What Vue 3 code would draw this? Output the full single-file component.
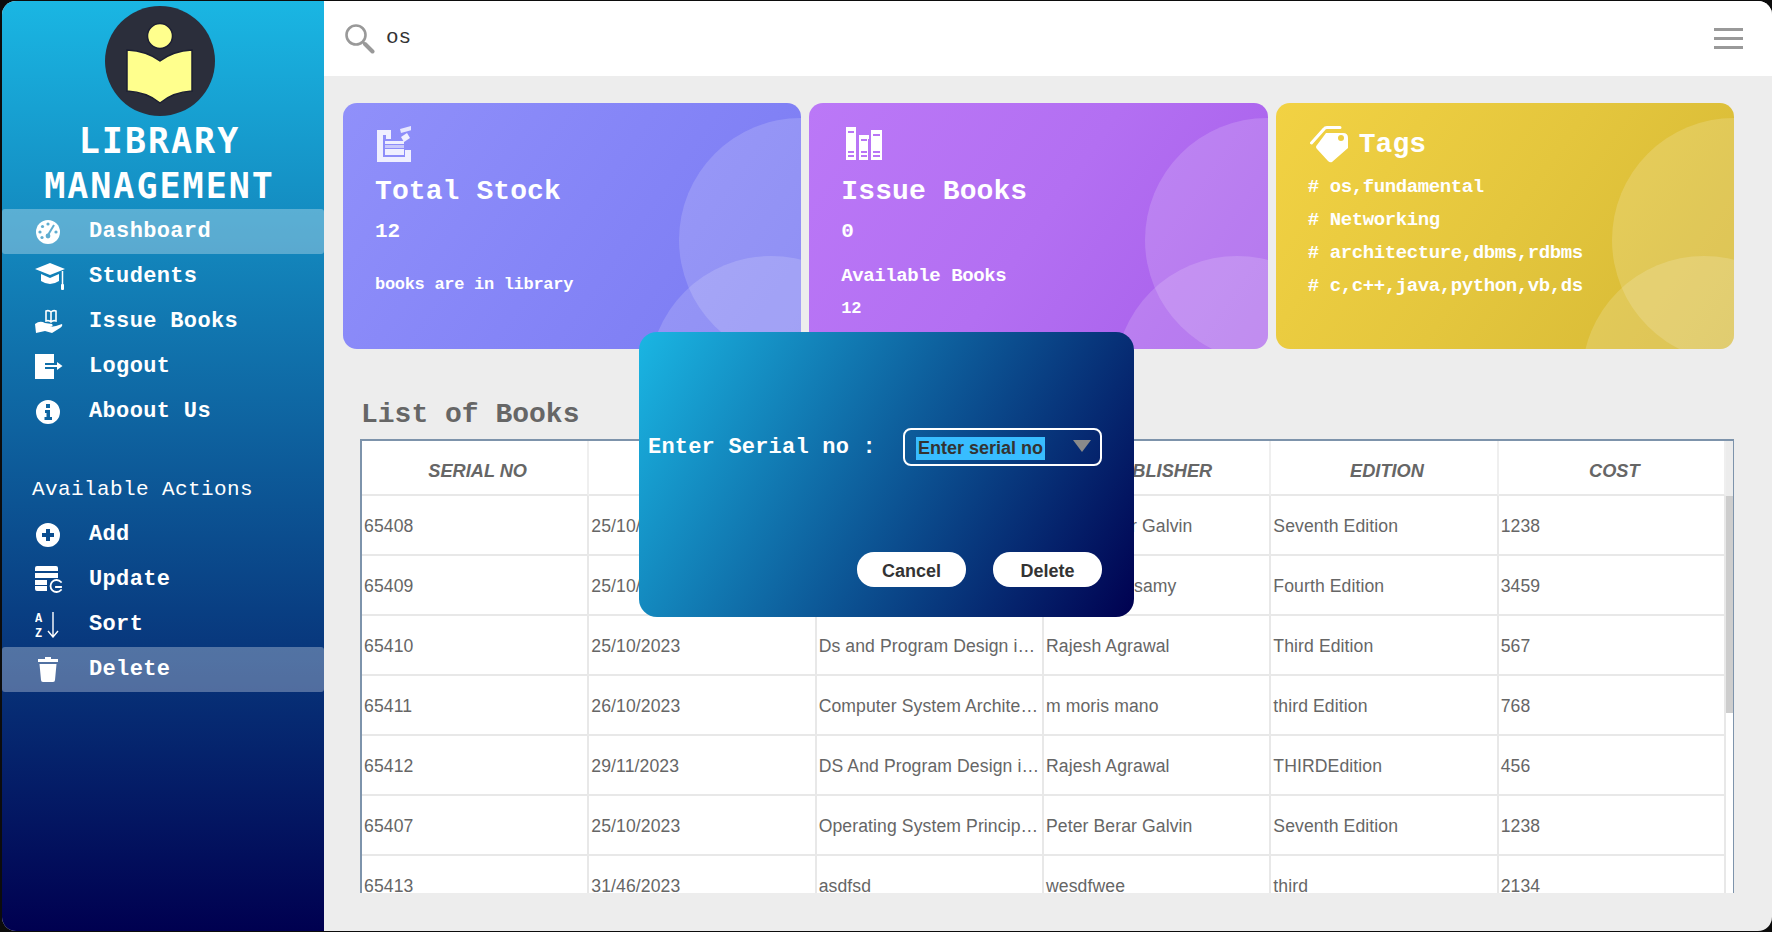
<script setup>
const mainNav = [
  { label: 'Dashboard', icon: 'dash', active: true },
  { label: 'Students', icon: 'cap' },
  { label: 'Issue Books', icon: 'issue' },
  { label: 'Logout', icon: 'logout' },
  { label: 'Aboout Us', icon: 'info' },
];
const actionNav = [
  { label: 'Add', icon: 'add' },
  { label: 'Update', icon: 'update' },
  { label: 'Sort', icon: 'sort' },
  { label: 'Delete', icon: 'trash', active: true },
];
const tags = ['os,fundamental', 'Networking', 'architecture,dbms,rdbms', 'c,c++,java,python,vb,ds'];
const columns = ['SERIAL NO', 'DATE', 'BOOK NAME', 'PUBLISHER', 'EDITION', 'COST'];
const books = [
  ['65408', '25/10/2023', 'Operating System Principles', 'Peter Berar Galvin', 'Seventh Edition', '1238'],
  ['65409', '25/10/2023', 'Computer Networking', 'E Balagurusamy', 'Fourth Edition', '3459'],
  ['65410', '25/10/2023', 'Ds and Program Design in C', 'Rajesh Agrawal', 'Third Edition', '567'],
  ['65411', '26/10/2023', 'Computer System Architecture', 'm moris mano', 'third Edition', '768'],
  ['65412', '29/11/2023', 'DS And Program Design in C', 'Rajesh Agrawal', 'THIRDEdition', '456'],
  ['65407', '25/10/2023', 'Operating System Principles', 'Peter Berar Galvin', 'Seventh Edition', '1238'],
  ['65413', '31/46/2023', 'asdfsd', 'wesdfwee', 'third', '2134'],
];
</script>

<template>
  <div class="frame">
    <aside class="sidebar">
      <div class="logo">
        <svg viewBox="0 0 110 110" width="110" height="110">
          <circle cx="55" cy="55" r="55" fill="#2b2e3b" />
          <circle cx="55" cy="30" r="12.5" fill="#ffff8d" stroke="#1c1f33" stroke-width="1.5" />
          <path d="M22 44 Q42 45 55 55 Q68 45 87 44 V85 Q68 86 55 97 Q42 86 22 85 Z" fill="#ffff8d" stroke="#1c1f33" stroke-width="1.5" />
        </svg>
      </div>
      <h1 class="brand">LIBRARY<br />MANAGEMENT</h1>

      <nav>
        <div v-for="item in mainNav" :key="item.label" class="nav-item" :class="{ active: item.active }">
          <span class="nav-icon">
            <svg v-if="item.icon === 'dash'" viewBox="0 0 26 26" width="26" height="26">
              <circle cx="13" cy="13" r="12" fill="#fff" />
              <g fill="#60add0">
                <circle cx="13" cy="5" r="1.6" /><circle cx="7.5" cy="7.5" r="1.6" /><circle cx="5" cy="13" r="1.6" />
                <circle cx="7" cy="18.5" r="1.6" /><circle cx="21" cy="13" r="1.6" /><circle cx="13" cy="17" r="2.4" />
              </g>
              <path d="M13 16 L19 6" stroke="#60add0" stroke-width="2" />
            </svg>
            <svg v-else-if="item.icon === 'cap'" viewBox="0 0 30 27" width="30" height="27">
              <path d="M15 0 L30 6 L15 12 L0 6 Z" fill="#fff" />
              <path d="M6 11 L15 15 L24 11 V18 Q15 24 6 18 Z" fill="#fff" />
              <path d="M27.5 8 V22" stroke="#fff" stroke-width="1.5" />
              <rect x="26" y="21" width="3" height="6" rx="1" fill="#fff" />
            </svg>
            <svg v-else-if="item.icon === 'issue'" viewBox="0 0 28 26" width="28" height="26">
              <path d="M11 2 Q14 1 16 3 Q18 1 21 2 V12 Q18 11 16 13 Q14 11 11 12 Z M16 3 V13" fill="none" stroke="#fff" stroke-width="1.6" />
              <path d="M0 15 Q5 11 10 14 L17 15 Q19 17 15 18 L21 17 L27 15 Q28 17 25 19 L17 24 L10 22 L1 24 Z" fill="#fff" />
            </svg>
            <svg v-else-if="item.icon === 'logout'" viewBox="0 0 28 25" width="28" height="25">
              <path d="M0 0 H19 V9 H10 V15 H19 V25 H0 Z" fill="#fff" />
              <path d="M10 12 H23" stroke="#fff" stroke-width="2" />
              <path d="M22 8 L27.5 12 L22 16 Z" fill="#fff" />
            </svg>
            <svg v-else-if="item.icon === 'info'" viewBox="0 0 26 26" width="26" height="26">
              <path fill-rule="evenodd" fill="#fff" d="M13 1 A12 12 0 1 0 13 25 A12 12 0 1 0 13 1 Z M11 5 H15 V9 H11 Z M10 11 H15 V18 H17 V21 H9.5 V18 H11.5 V14 H10 Z" />
            </svg>
          </span>
          <span class="nav-label">{{ item.label }}</span>
        </div>
      </nav>

      <div class="nav-heading">Available Actions</div>

      <nav>
        <div v-for="item in actionNav" :key="item.label" class="nav-item" :class="{ active: item.active }">
          <span class="nav-icon">
            <svg v-if="item.icon === 'add'" viewBox="0 0 26 26" width="26" height="26">
              <path fill-rule="evenodd" fill="#fff" d="M13 1 A12 12 0 1 0 13 25 A12 12 0 1 0 13 1 Z M11 7 H15 V11 H19 V15 H15 V19 H11 V15 H7 V11 H11 Z" />
            </svg>
            <svg v-else-if="item.icon === 'update'" viewBox="0 0 28 27" width="28" height="27">
              <path d="M2 0 H21 Q23 0 23 2 V5 H0 V2 Q0 0 2 0 Z M0 7 H23 V12 H0 Z M0 14 H12 V19 H0 Z M12 20 H0 V23 Q0 25 2 25 H12 Z" fill="#fff" />
              <path d="M26 16 A6 6 0 1 0 26 24 M26 21 H21" fill="none" stroke="#fff" stroke-width="1.8" stroke-linecap="square" />
            </svg>
            <svg v-else-if="item.icon === 'sort'" viewBox="0 0 26 26" width="26" height="26">
              <text x="0" y="10" class="sort-letter">A</text>
              <text x="0" y="25" class="sort-letter">Z</text>
              <path d="M18 0 V24 M13 19 L18 25 L23 19" fill="none" stroke="#fff" stroke-width="1.4" />
            </svg>
            <svg v-else-if="item.icon === 'trash'" class="trash" viewBox="0 0 20 25" width="20" height="25">
              <path d="M7 0 H13 V2 H20 V5 H0 V2 H7 Z" fill="#fff" />
              <path d="M1.5 7 H18.5 L17 23 Q17 25 15 25 H5 Q3 25 3 23 Z" fill="#fff" />
            </svg>
          </span>
          <span class="nav-label">{{ item.label }}</span>
        </div>
      </nav>
    </aside>

    <main class="main">
      <header class="topbar">
        <svg class="search-icon" viewBox="0 0 30 30" width="30" height="30">
          <circle cx="11" cy="11" r="9.5" fill="none" stroke="#999" stroke-width="2.6" />
          <path d="M18 18 L20 20" stroke="#999" stroke-width="2" />
          <path d="M20 20 L27.5 27.5" stroke="#999" stroke-width="4" stroke-linecap="round" />
        </svg>
        <span class="search-text">os</span>
        <div class="hamburger"><i></i><i></i><i></i></div>
      </header>

      <section class="content">
        <div class="cards">
          <article class="card card-blue">
            <svg class="card-icon" viewBox="0 0 34 38" width="34" height="38">
              <path d="M0 5 H14 V14 H9 V10 H6 V32 H28 V25 H34 V37 H0 Z" fill="#efefff" />
              <path d="M8 16 H27 V19 H8 Z M8 24 H27 V30 H8 Z" fill="#efefff" />
              <path d="M8 20 H27 V23 H8 Z" fill="#c9c9fb" />
              <path d="M24 12 L30 8 L33 13 L27 17 Z" fill="#efefff" />
              <path d="M27 3 L38 0 L39 4 L28 7 Z" fill="#e6e6fe" transform="translate(-4 1)" />
            </svg>
            <h2>Total Stock</h2>
            <p class="count">12</p>
            <p class="sub first">books are in library</p>
          </article>

          <article class="card card-purple">
            <svg class="card-icon" viewBox="0 0 36 33" width="36" height="33">
              <path fill="#fff" fill-rule="evenodd" d="M0 0 H10 V33 H0 Z M2 4 V6 H8 V4 Z M2 24 V26 H8 V24 Z M2 28 V30 H8 V28 Z
                M13 8 H23 V12 H22 V33 H13 Z M15 12 V14 H21 V12 Z M15 24 V26 H21 V24 Z M15 28 V30 H21 V28 Z
                M25 3 H36 V33 H25 Z M27 7 V9 H34 V7 Z M27 24 V26 H34 V24 Z M27 28 V30 H34 V28 Z" />
            </svg>
            <h2>Issue Books</h2>
            <p class="count">0</p>
            <p class="sub available">Available Books</p>
            <p class="sub small">12</p>
          </article>

          <article class="card card-yellow">
            <div class="tag-head">
              <svg viewBox="0 0 38 37" width="38" height="37">
                <path fill="#fff" fill-rule="evenodd" d="M16 7 H33 Q38 7 38 12 V22 L22 36 Q20 37 18 35 L7 23 Q5 21 7 19 Z M31 9 A3 3 0 1 0 31 15 A3 3 0 1 0 31 9 Z" />
                <path d="M1.5 17 L14 3 Q15 1.5 17 1.5 H30" fill="none" stroke="#fff" stroke-width="3" stroke-linecap="round" />
              </svg>
              <h2>Tags</h2>
            </div>
            <p v-for="tag in tags" :key="tag" class="tag-line"># {{ tag }}</p>
          </article>
        </div>

        <h3 class="list-title">List of Books</h3>

        <div class="table-box">
          <table class="head-table">
            <thead>
              <tr><th v-for="col in columns" :key="col">{{ col }}</th></tr>
            </thead>
          </table>
          <div class="table-scroll">
            <div class="table-body">
              <table>
                <tbody>
                  <tr v-for="row in books" :key="row[0]">
                    <td v-for="(cell, i) in row" :key="i">{{ cell }}</td>
                  </tr>
                </tbody>
              </table>
            </div>
            <div class="scrollbar"><div class="thumb"></div></div>
          </div>
        </div>
      </section>
    </main>

    <div class="dialog">
      <div class="dialog-row">
        <label>Enter Serial no :</label>
        <div class="fake-select">
          <span class="selected">Enter serial no</span>
          <span class="arrow"></span>
        </div>
      </div>
      <div class="dialog-actions">
        <button>Cancel</button>
        <button>Delete</button>
      </div>
    </div>
  </div>
</template>

<style>
html, body {
  margin: 0;
  background: #0c0c0c;
  overflow: hidden;
}
</style>

<style scoped>
.frame {
  position: relative;
  display: flex;
  width: 1770px;
  height: 930px;
  margin: 1px 0 0 2px;
  border-radius: 14px;
  overflow: hidden;
  font-family: "Liberation Mono", "DejaVu Sans Mono", monospace;
  background: #ededed;
}

/* sidebar */
.sidebar {
  width: 322px;
  flex: none;
  background: linear-gradient(180deg, #1ab6e3 0%, #000050 100%);
  color: #fff;
}
.logo {
  display: flex;
  justify-content: center;
  padding: 5px 7px 0 0;
  height: 115px;
  box-sizing: border-box;
}
.logo svg {
  display: block;
}
.brand {
  margin: 3px 0 0;
  padding-right: 7px;
  font-family: "DejaVu Sans Mono", monospace;
  font-size: 35px;
  line-height: 45px;
  font-weight: 700;
  letter-spacing: 2px;
  text-align: center;
  height: 90px;
}
.nav-item {
  display: flex;
  align-items: center;
  height: 45px;
  border-radius: 3px;
  padding-left: 33px;
  font-size: 22px;
  font-weight: 700;
  letter-spacing: 0.35px;
}
.nav-item.active {
  background: rgba(255, 255, 255, 0.3);
}
.nav-label {
  margin-bottom: 1px;
}
.nav-icon {
  width: 54px;
  display: flex;
  align-items: center;
  flex: none;
}
.nav-icon svg {
  display: block;
}
.nav-icon .trash {
  margin-left: 3px;
}
.nav-heading {
  margin-top: 31px;
  height: 47px;
  padding: 10px 0 0 30px;
  box-sizing: border-box;
  line-height: 30px;
  font-size: 21px;
  letter-spacing: 0.4px;
}
.sort-letter {
  font-family: "Liberation Mono", monospace;
  font-size: 12px;
  font-weight: 700;
  fill: #fff;
}

/* top bar */
.main {
  flex: 1;
  min-width: 0;
  display: flex;
  flex-direction: column;
}
.topbar {
  height: 75px;
  flex: none;
  display: flex;
  align-items: center;
  background: #fff;
  padding: 0 29px 0 21px;
  box-sizing: border-box;
}
.search-icon {
  flex: none;
}
.search-text {
  margin: 0 0 2px 11px;
  font-size: 21px;
  color: #333;
}
.hamburger {
  margin-left: auto;
  width: 29px;
  display: flex;
  flex-direction: column;
  gap: 6px;
}
.hamburger i {
  display: block;
  height: 3px;
  background: #999;
}

/* cards */
.content {
  flex: 1;
  min-height: 0;
  padding: 27px 38px 36px 19px;
  display: flex;
  flex-direction: column;
}
.cards {
  display: grid;
  grid-template-columns: repeat(3, 1fr);
  gap: 8px;
}
.card {
  position: relative;
  height: 246px;
  box-sizing: border-box;
  padding: 22px 32px 0;
  border-radius: 14px;
  overflow: hidden;
  color: #fff;
}
.card::before,
.card::after {
  content: "";
  position: absolute;
  width: 244px;
  height: 244px;
  border-radius: 50%;
  background: rgba(255, 255, 255, 0.16);
}
.card::before {
  left: 336px;
  top: 15px;
}
.card::after {
  left: 306px;
  top: 153px;
}
.card-blue {
  background: linear-gradient(125deg, #9090fa 0%, #8585f7 50%, #7b7bf2 100%);
}
.card-purple {
  background: linear-gradient(125deg, #bb78f7 0%, #b36ff2 50%, #a75eea 100%);
}
.card-yellow {
  background: linear-gradient(125deg, #f2d243 0%, #e4c63d 50%, #d5b835 100%);
}
.card-icon {
  display: block;
  margin-left: 2px;
}
.card-purple .card-icon {
  margin: 2px 0 14px 5px;
}
.card h2 {
  margin: 11px 0 0;
  font-size: 28px;
  line-height: 36px;
  font-weight: 700;
  letter-spacing: 0.1px;
}
.card p {
  margin: 0;
  position: relative;
  z-index: 1;
}
.count {
  margin-top: 9px !important;
  font-size: 21px;
  line-height: 26px;
  font-weight: 700;
}
.sub {
  font-size: 17px;
  line-height: 24px;
  font-weight: 700;
  letter-spacing: -0.3px;
}
.sub.first {
  margin-top: 28px !important;
}
.sub.available {
  margin-top: 19px !important;
  font-size: 19px;
  letter-spacing: -0.4px;
}
.sub.small {
  margin-top: 10px !important;
  line-height: 22px;
  letter-spacing: -0.4px;
}
.tag-head {
  display: flex;
  align-items: center;
  gap: 11px;
  height: 38px;
}
.tag-head svg {
  flex: none;
  margin-left: 2px;
}
.tag-head h2 {
  margin: 2px 0 0;
}
.tag-line {
  font-size: 19px;
  line-height: 33px;
  font-weight: 700;
  letter-spacing: -0.4px;
}
.tag-head + .tag-line {
  margin-top: 8px;
}

/* table */
.list-title {
  margin: 48px 0 0 18px;
  height: 42px;
  line-height: 36px;
  font-size: 28px;
  font-weight: 700;
  color: #666;
}
.table-box {
  margin-left: 17px;
  height: 454px;
  border: solid #7d93ab;
  border-width: 2px 1px 0 2px;
  box-sizing: border-box;
  display: flex;
  flex-direction: column;
  background: #ececec;
  font-family: "Liberation Sans", Arial, sans-serif;
  color: #666;
}
.table-box table {
  table-layout: fixed;
  width: 1364px;
  border-collapse: separate;
  border-spacing: 0;
}
.head-table th {
  height: 46px;
  padding: 7px 0 0 6px;
  background: #fff;
  border-right: 2px solid #efefef;
  border-bottom: 2px solid #e8e8e8;
  font-size: 18.2px;
  font-style: italic;
  font-weight: 700;
}
.table-scroll {
  flex: 1;
  min-height: 0;
  display: flex;
}
.table-body {
  width: 1364px;
  flex: none;
  overflow: hidden;
  background: #fff;
}
.scrollbar {
  flex: 1;
  background: #fff;
}
.thumb {
  height: 217px;
  background: #cdcdcd;
}
.table-body td {
  height: 55px;
  padding: 3px 0 0 2px;
  background: #fff;
  border-right: 2px solid #e8e8e8;
  border-bottom: 2px solid #e8e8e8;
  font-size: 17.6px;
  letter-spacing: 0.1px;
  white-space: nowrap;
  overflow: hidden;
  text-overflow: ellipsis;
}

/* delete dialog */
.dialog {
  position: absolute;
  left: 637px;
  top: 331px;
  width: 495px;
  height: 285px;
  box-sizing: border-box;
  padding: 96px 32px 30px 9px;
  border-radius: 18px;
  display: flex;
  flex-direction: column;
  justify-content: space-between;
  background: linear-gradient(120deg, #1ab6e3 0%, #000050 100%);
  color: #fff;
}
.dialog-row {
  display: flex;
  align-items: center;
  justify-content: space-between;
}
.dialog-row label {
  margin-top: 1px;
  font-size: 22px;
  font-weight: 700;
  letter-spacing: 0.2px;
}
.fake-select {
  width: 199px;
  height: 38px;
  box-sizing: border-box;
  border: 2px solid #fff;
  border-radius: 8px;
  display: flex;
  align-items: center;
  justify-content: space-between;
  padding: 0 9px 0 11px;
}
.selected {
  margin-top: 3px;
  background: #38bdff;
  color: #333;
  padding: 0 2px;
  font-family: "Liberation Sans", Arial, sans-serif;
  font-size: 18px;
  font-weight: 700;
  line-height: 23px;
  white-space: nowrap;
}
.arrow {
  width: 0;
  height: 0;
  border-left: 9px solid transparent;
  border-right: 9px solid transparent;
  border-top: 12px solid #8a8a8a;
  margin-bottom: 3px;
}
.dialog-actions {
  display: flex;
  justify-content: flex-end;
  gap: 27px;
}
.dialog-actions button {
  width: 109px;
  height: 35px;
  padding: 3px 0 0;
  border: 0;
  border-radius: 17px;
  background: #fff;
  color: #333;
  font-family: "Liberation Sans", Arial, sans-serif;
  font-size: 18px;
  font-weight: 700;
}
</style>
